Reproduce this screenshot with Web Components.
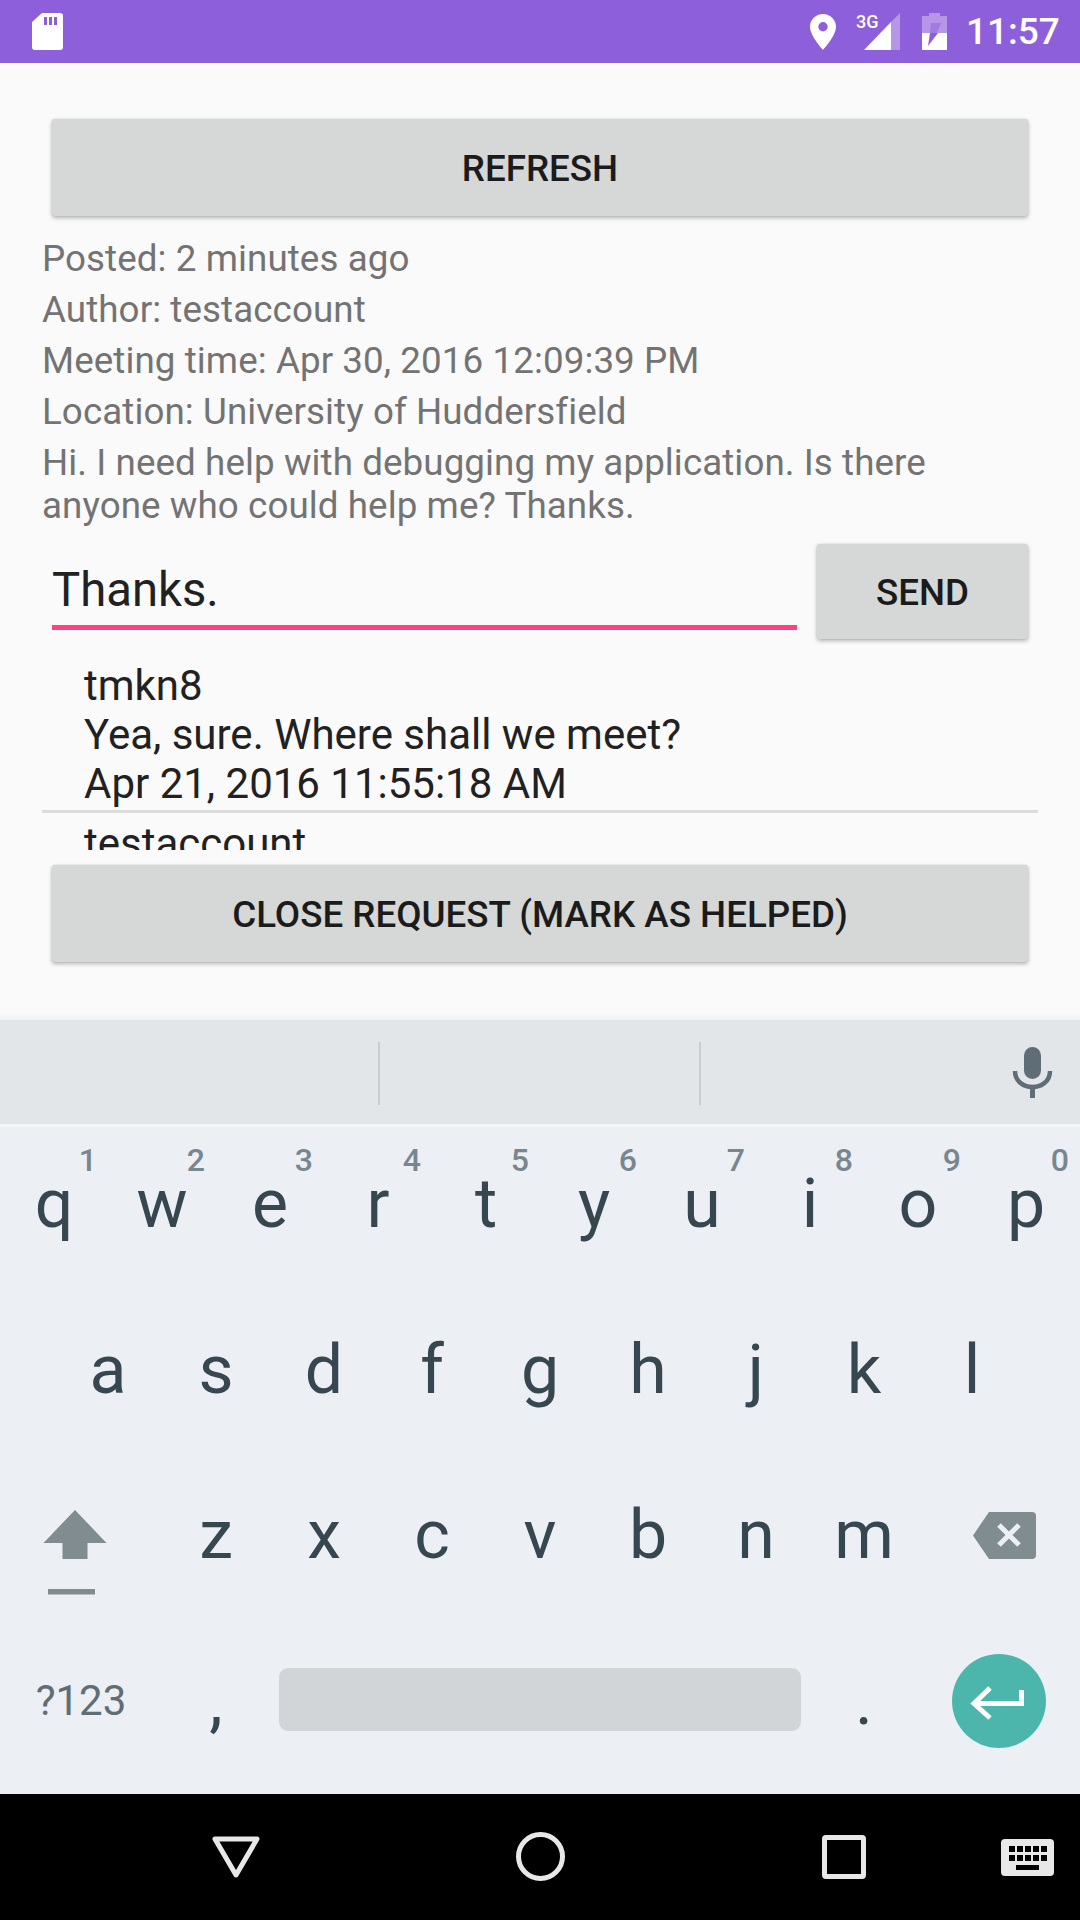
<!DOCTYPE html>
<html>
<head>
<meta charset="utf-8">
<title>Request</title>
<style>
  html, body { margin: 0; padding: 0; }
  body { width: 1080px; height: 1920px; overflow: hidden; background: #fafafa; font-family: Roboto, "Liberation Sans", sans-serif; }
  app-screen { height: 1920px; }
</style>
</head>
<body>
<app-screen>
  <status-bar slot="status"></status-bar>
  <raised-button slot="main" style="margin:56px 52px 0;height:97px">Refresh</raised-button>
  <request-info slot="main">
    <info-line>Posted: 2 minutes ago</info-line>
    <info-line>Author: testaccount</info-line>
    <info-line>Meeting time: Apr 30, 2016 12:09:39 PM</info-line>
    <info-line>Location: University of Huddersfield</info-line>
    <info-line>Hi. I need help with debugging my application. Is there anyone who could help me? Thanks.</info-line>
  </request-info>
  <reply-form slot="main">
    <text-edit>Thanks.</text-edit>
    <raised-button slot="send" style="height:95px">Send</raised-button>
  </reply-form>
  <comment-list slot="main">
    <comment-item>tmkn8<br>Yea, sure. Where shall we meet?<br>Apr 21, 2016 11:55:18 AM</comment-item>
    <comment-item>testaccount</comment-item>
  </comment-list>
  <raised-button slot="main" style="margin:15px 52px 0;height:97px">Close request (mark as helped)</raised-button>
  <soft-keyboard slot="keyboard"></soft-keyboard>
  <nav-bar slot="nav"></nav-bar>
</app-screen>

<script>
"use strict";
class AppScreen extends HTMLElement {
  constructor() {
    super();
    this.attachShadow({ mode: "open" });
    this.shadowRoot.innerHTML = `
      <style>
        :host { display: flex; flex-direction: column; width: 1080px; }
        #main { display: flex; flex-direction: column; height: 950px; flex: none; background: #fafafa; }
      </style>
      <slot name="status"></slot>
      <div id="main"><slot name="main"></slot></div>
      <slot name="keyboard"></slot>
      <slot name="nav"></slot>`;
  }
}

class StatusBar extends HTMLElement {
  constructor() {
    super();
    this.attachShadow({ mode: "open" });
    this.shadowRoot.innerHTML = `
      <style>
        :host { display: flex; align-items: center; height: 63px; background: #8e5fdb; color: #fff; padding: 0 23px 0 32px; }
        svg { display: block; flex: none; }
        #sd { margin-right: auto; }
        #pin { margin-right: 28px; }
        #net { width: 36px; height: 37px; position: relative; margin-right: 22px; }
        #net span { position: absolute; left: -8px; top: 0; font: 500 18px/18px Roboto, sans-serif; }
        #time { font: 500 37px/63px Roboto, sans-serif; margin-left: 19px; width: 91px; white-space: nowrap; }
      </style>
      <svg id="sd" width="31" height="37" viewBox="0 0 31 37">
        <path fill="#fff" d="M10 0H28a3 3 0 0 1 3 3V34a3 3 0 0 1-3 3H3a3 3 0 0 1-3-3V9Z"/>
        <path fill="#8e5fdb" d="M12 4h3v8h-3zM17 4h3v8h-3zM22 4h3v8h-3z"/>
      </svg>
      <svg id="pin" width="26" height="36" viewBox="0 0 26 36">
        <path fill="#fff" fill-rule="evenodd" d="M13 0C5.800 0 0 5.700 0 12.800 0 22 13 36 13 36s13-14 13-23.200C26 5.700 20.200 0 13 0Zm0 17.500a4.700 4.700 0 1 1 0-9.400 4.700 4.700 0 0 1 0 9.400Z"/>
      </svg>
      <div id="net">
        <svg width="36" height="37" viewBox="0 0 36 37">
          <path fill="#fff" fill-opacity=".35" d="M36 0V37H27V9Z"/>
          <path fill="#fff" d="M27 9V37H0Z"/>
        </svg>
        <span>3G</span>
      </div>
      <svg width="25" height="37" viewBox="0 0 25 37">
        <path fill="#fff" fill-opacity=".35" d="M7 3V0H18V3H25V20H0V3Z"/>
        <path fill="#fff" d="M0 20H25V37H0Z"/>
        <path fill="#8e5fdb" d="M8 20H16L6 33Z"/>
        <path fill="#8e5fdb" fill-opacity=".5" d="M9 10H19L15 20H8Z"/>
      </svg>
      <span id="time">11:57</span>`;
  }
}

class RaisedButton extends HTMLElement {
  constructor() {
    super();
    this.attachShadow({ mode: "open" });
    this.shadowRoot.innerHTML = `
      <style>
        :host { display: flex; align-items: center; justify-content: center; flex: none; box-sizing: border-box; padding-top: 2px; background: #d6d7d7; border-radius: 3px;
          box-shadow: 0 2px 4px rgba(0,0,0,.28), 0 0 2px rgba(0,0,0,.12);
          color: #1b1b1b; font: 500 36.75px/43px Roboto, sans-serif; text-transform: uppercase; }
      </style>
      <slot></slot>`;
  }
}

class RequestInfo extends HTMLElement {
  constructor() {
    super();
    this.attachShadow({ mode: "open" });
    this.shadowRoot.innerHTML = `
      <style>
        :host { display: flex; flex-direction: column; gap: 8px; margin: 21px 42px 0 42px; letter-spacing: .08px; color: #737373; font: 400 36.75px/43px Roboto, sans-serif; }
      </style>
      <slot></slot>`;
  }
}

class InfoLine extends HTMLElement {
  constructor() {
    super();
    this.attachShadow({ mode: "open" });
    this.shadowRoot.innerHTML = `<style>:host { display: block; }</style><slot></slot>`;
  }
}

class ReplyForm extends HTMLElement {
  constructor() {
    super();
    this.attachShadow({ mode: "open" });
    this.shadowRoot.innerHTML = `
      <style>
        :host { display: grid; grid-template-columns: 745px 211px; column-gap: 20px; margin: 17px 52px 0; }
      </style>
      <slot></slot><slot name="send"></slot>`;
  }
}

class TextEdit extends HTMLElement {
  constructor() {
    super();
    this.attachShadow({ mode: "open" });
    this.shadowRoot.innerHTML = `
      <style>
        :host { display: block; height: 86px; box-sizing: border-box; border-bottom: 5px solid #ff4081; color: #212121; font: 400 47.25px/92px Roboto, sans-serif; }
      </style>
      <slot></slot>`;
  }
}

class CommentList extends HTMLElement {
  constructor() {
    super();
    this.attachShadow({ mode: "open" });
    this.shadowRoot.innerHTML = `
      <style>
        :host { display: block; height: 195px; overflow: hidden; margin: 16px 42px 0; }
      </style>
      <slot></slot>`;
  }
}

class CommentItem extends HTMLElement {
  constructor() {
    super();
    this.attachShadow({ mode: "open" });
    this.shadowRoot.innerHTML = `
      <style>
        :host { display: block; padding: 6px 0 2px 42px; border-bottom: 3px solid #dcdcdc; color: #212121; font: 400 42px/49px Roboto, sans-serif; }
      </style>
      <slot></slot>`;
  }
}

class SoftKeyboard extends HTMLElement {
  constructor() {
    super();
    this.attachShadow({ mode: "open" });
    this.shadowRoot.innerHTML = `
      <style>
        :host { display: flex; flex-direction: column; height: 781px; flex: none; background: #eceff3; }
        #edge { height: 7px; background: linear-gradient(#fafafa, #f0f1f3); }
        #strip { height: 104px; display: flex; align-items: center; background: #e3e6e9; border-bottom: 3px solid #f2f4f6; position: relative; }
        .sep { position: absolute; top: 22px; width: 2px; height: 63px; background: #c9cdd0; }
        #mic { position: absolute; left: 1012px; top: 27px; }
        #keys { display: flex; flex-direction: column; }
        .row { display: grid; grid-template-columns: repeat(20, 54px); height: 165.500px; }
        .row.home { padding-left: 54px; }
      </style>
      <div id="edge"></div>
      <div id="strip">
        <div class="sep" style="left:378px"></div>
        <div class="sep" style="left:699px"></div>
        <svg id="mic" width="42" height="52" viewBox="0 0 42 52">
          <rect x="12" y="0" width="17" height="32" rx="8.500" fill="#5e6d76"/>
          <path d="M3 24c0 10 8 16 17.500 16S38 34 38 24" fill="none" stroke="#5e6d76" stroke-width="4.500"/>
          <path d="M20.500 38V51" stroke="#5e6d76" stroke-width="5"/>
        </svg>
      </div>
      <div id="keys">
        <div class="row"><slot name="r1"></slot></div>
        <div class="row home"><slot name="r2"></slot></div>
        <div class="row"><slot name="r3"></slot></div>
        <div class="row"><slot name="r4"></slot></div>
      </div>`;
  }

  connectedCallback() {
    let html = "";
    [..."qwertyuiop"].forEach((c, i) => {
      html += `<kbd-key slot="r1" hint="${(i + 1) % 10}">${c}</kbd-key>`;
    });
    [..."asdfghjkl"].forEach((c) => {
      html += `<kbd-key slot="r2">${c}</kbd-key>`;
    });
    html += `<kbd-key slot="r3" style="grid-column:span 3">
        <svg width="64" height="85" viewBox="0 0 64 85" style="display:block;margin:34px 12px 0 0">
          <path fill="#808c8f" d="M32 0 63.500 33H44.500V49H19.500V33H.5Z"/>
          <rect x="5" y="79" width="47" height="5.500" fill="#808c8f"/>
        </svg></kbd-key>`;
    [..."zxcvbnm"].forEach((c) => {
      html += `<kbd-key slot="r3">${c}</kbd-key>`;
    });
    html += `<kbd-key slot="r3" style="grid-column:span 3">
        <svg width="63" height="47" viewBox="0 0 63 47" style="display:block;margin-left:11px">
          <path fill="#808c8f" d="M16 0H59a4 4 0 0 1 4 4V43a4 4 0 0 1-4 4H16L0 23.500Z"/>
          <path stroke="#eceff3" stroke-width="5" d="M26 13 46 33M46 13 26 33"/>
        </svg></kbd-key>`;
    html += `<kbd-key slot="r4" kind="mode" style="grid-column:span 3">?123</kbd-key>
      <kbd-key slot="r4">,</kbd-key>
      <kbd-key slot="r4" style="grid-column:span 10">
        <div style="width:522px;height:63px;border-radius:9px;background:#d1d5d8;margin-top:-2px"></div></kbd-key>
      <kbd-key slot="r4">.</kbd-key>
      <kbd-key slot="r4" style="grid-column:span 3">
        <svg width="94" height="94" viewBox="-47 -47 94 94" style="display:block">
          <circle r="47" fill="#4db6ac"/>
          <path d="M-24 2.500H22.500V-11M-9-13-25 2.500-9 17" fill="none" stroke="#fff" stroke-width="5"/>
        </svg></kbd-key>`;
    this.innerHTML = html;
  }
}

class KbdKey extends HTMLElement {
  constructor() {
    super();
    this.attachShadow({ mode: "open" });
    this.shadowRoot.innerHTML = `
      <style>
        :host { display: flex; grid-column: span 2; box-sizing: border-box; padding-bottom: 11px; align-items: center; justify-content: center; position: relative; color: #37474f; font: 400 68px/68px Roboto, sans-serif; }
        :host([kind=mode]) { font-size: 42px; color: #5f6d75; }
        #hint { position: absolute; right: 11px; top: 17px; font: 500 32px/32px Roboto, sans-serif; color: #78868f; }
      </style>
      <slot></slot><span id="hint"></span>`;
  }
  connectedCallback() {
    this.shadowRoot.querySelector("#hint").textContent = this.getAttribute("hint") || "";
  }
}

class NavBar extends HTMLElement {
  constructor() {
    super();
    this.attachShadow({ mode: "open" });
    this.shadowRoot.innerHTML = `
      <style>
        :host { display: flex; align-items: center; height: 126px; background: #000; position: relative; }
        svg { position: absolute; display: block; }
      </style>
      <svg style="left:212px;top:42px" width="48" height="42" viewBox="0 0 48 42">
        <path d="M3 3H45L24 39Z" fill="none" stroke="#e8e8e8" stroke-width="5" stroke-linejoin="round"/>
      </svg>
      <svg style="left:516px;top:38px" width="49" height="49" viewBox="0 0 49 49">
        <circle cx="24.500" cy="24.500" r="22" fill="none" stroke="#e8e8e8" stroke-width="5"/>
      </svg>
      <svg style="left:822px;top:41px" width="44" height="44" viewBox="0 0 44 44">
        <rect x="2.500" y="2.500" width="39" height="39" rx="1.500" fill="none" stroke="#e8e8e8" stroke-width="5"/>
      </svg>
      <svg style="left:1001px;top:45px" width="53" height="37" viewBox="0 0 53 37">
        <rect width="53" height="37" rx="4" fill="#e8e8e8"/>
        <path fill="#000" d="M8 7h6v6H8zM16 7h6v6h-6zM24 7h6v6h-6zM32 7h6v6h-6zM40 7h6v6h-6zM8 16h6v6H8zM16 16h6v6h-6zM24 16h6v6h-6zM32 16h6v6h-6zM40 16h6v6h-6zM15 26h23v5H15z"/>
      </svg>`;
  }
}

customElements.define("app-screen", AppScreen);
customElements.define("status-bar", StatusBar);
customElements.define("raised-button", RaisedButton);
customElements.define("request-info", RequestInfo);
customElements.define("info-line", InfoLine);
customElements.define("reply-form", ReplyForm);
customElements.define("text-edit", TextEdit);
customElements.define("comment-list", CommentList);
customElements.define("comment-item", CommentItem);
customElements.define("soft-keyboard", SoftKeyboard);
customElements.define("kbd-key", KbdKey);
customElements.define("nav-bar", NavBar);
</script>
</body>
</html>
